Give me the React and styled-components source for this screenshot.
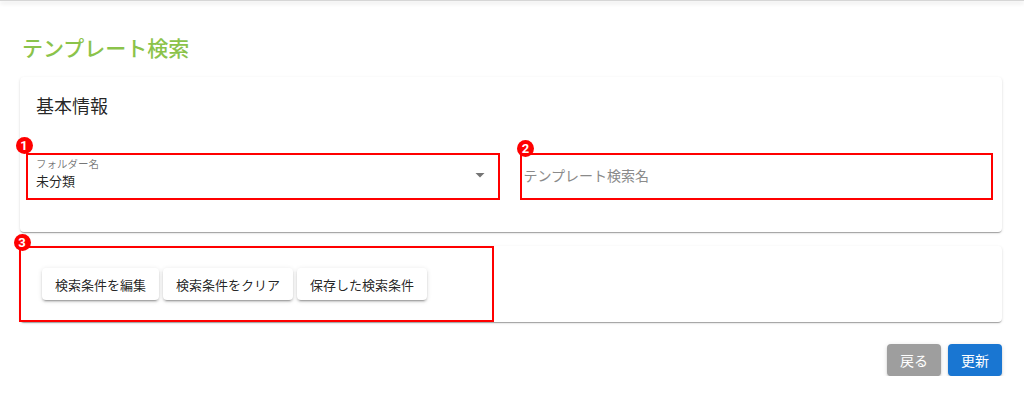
import React from 'react'
import styled, { createGlobalStyle } from 'styled-components'

const GlobalStyle = createGlobalStyle`
  body {
    margin: 0;
    background: #fff;
    font-family: Roboto, "Noto Sans CJK JP", sans-serif;
    color: rgba(0, 0, 0, 0.87);
  }
`

const TopBar = styled.div`
  height: 1px;
  background: #d6d6d6;
  box-shadow: 0 2px 4px rgba(0, 0, 0, 0.22);
`

const Page = styled.main`
  padding: 0 22px 0 20px;
`

const Title = styled.h1`
  margin: 33px 0 12px 2px;
  font-size: 21px;
  line-height: 31px;
  font-weight: 500;
  color: #8bc34a;
`

const Card = styled.section`
  background: #fff;
  border-radius: 4px;
  box-shadow: 0 2px 1px -1px rgba(0, 0, 0, 0.2), 0 1px 1px 0 rgba(0, 0, 0, 0.14),
    0 1px 3px 0 rgba(0, 0, 0, 0.12);
  margin-top: ${({ $gap }) => $gap || 0}px;
`

const CardHeading = styled.h2`
  margin: 0;
  padding: 16px 16px 0;
  font-size: 18px;
  line-height: 27px;
  font-weight: 400;
`

const FieldGrid = styled.div`
  display: grid;
  grid-template-columns: 1fr 1fr;
  gap: 20px;
  padding: 33px 9px 32px 6px;
`

const Marked = styled.div`
  position: relative;
  border: 2px solid #ff0000;
  box-sizing: border-box;
`

const Badge = styled.span`
  position: absolute;
  left: ${({ $x }) => $x}px;
  top: ${({ $y }) => $y}px;
  width: 17px;
  height: 17px;
  border-radius: 50%;
  background: #f00;
  color: #fff;
  font: 700 13px/17px Roboto, sans-serif;
  text-align: center;
`

const SelectBox = styled(Marked)`
  height: 47px;
  padding: 0 6px 3px 8px;
  display: flex;
  align-items: center;
`

const SelectText = styled.div`
  flex: 1;
`

const SmallLabel = styled.div`
  font-size: 10.5px;
  line-height: 14px;
  color: rgba(0, 0, 0, 0.54);
`

const Value = styled.div`
  font-size: 13px;
  line-height: 20px;
`

const TextBox = styled(Marked)`
  height: 47px;
  padding: 0 2px 4px;
  display: flex;
  align-items: center;
  font-size: 14px;
  color: #8a8a8a;
`

const ButtonCard = styled(Card)`
  height: 76px;
`

const ButtonGroup = styled(Marked)`
  width: 475px;
  height: 76px;
  margin-left: -1px;
  padding-left: 21px;
  display: flex;
  align-items: center;
  gap: 4px;
`

const Button = styled.button`
  height: 32px;
  padding: 0 13px;
  border: none;
  border-radius: 4px;
  font-family: Roboto, "Noto Sans CJK JP", sans-serif;
  font-size: ${({ $size }) => $size || 13}px;
  background: ${({ $bg }) => $bg || '#fff'};
  color: ${({ $bg }) => ($bg ? '#fff' : 'rgba(0, 0, 0, 0.87)')};
  box-shadow: 0 3px 1px -2px rgba(0, 0, 0, 0.2), 0 2px 2px 0 rgba(0, 0, 0, 0.14),
    0 1px 5px 0 rgba(0, 0, 0, 0.12);
  cursor: pointer;
`

const Actions = styled.div`
  display: flex;
  justify-content: flex-end;
  gap: 7px;
  margin-top: 22px;
`

const ArrowDrop = () => (
  <svg width="24" height="24" viewBox="0 0 24 24" fill="#757575">
    <path d="M7.5 10l4.5 4.5 4.5-4.5z" />
  </svg>
)

export default function App() {
  return (
    <>
      <GlobalStyle />
      <TopBar />
      <Page>
        <Title>テンプレート検索</Title>
        <Card>
          <CardHeading>基本情報</CardHeading>
          <FieldGrid>
            <SelectBox>
              <Badge $x={-12.5} $y={-18.5}>1</Badge>
              <SelectText>
                <SmallLabel>フォルダー名</SmallLabel>
                <Value>未分類</Value>
              </SelectText>
              <ArrowDrop />
            </SelectBox>
            <TextBox>
              <Badge $x={-4.5} $y={-15.5}>2</Badge>
              テンプレート検索名
            </TextBox>
          </FieldGrid>
        </Card>
        <ButtonCard $gap={14}>
          <ButtonGroup>
            <Badge $x={-7.5} $y={-14.5}>3</Badge>
            <Button>検索条件を編集</Button>
            <Button>検索条件をクリア</Button>
            <Button>保存した検索条件</Button>
          </ButtonGroup>
        </ButtonCard>
        <Actions>
          <Button $bg="#9e9e9e" $size={14}>戻る</Button>
          <Button $bg="#1976d2" $size={14}>更新</Button>
        </Actions>
      </Page>
    </>
  )
}
